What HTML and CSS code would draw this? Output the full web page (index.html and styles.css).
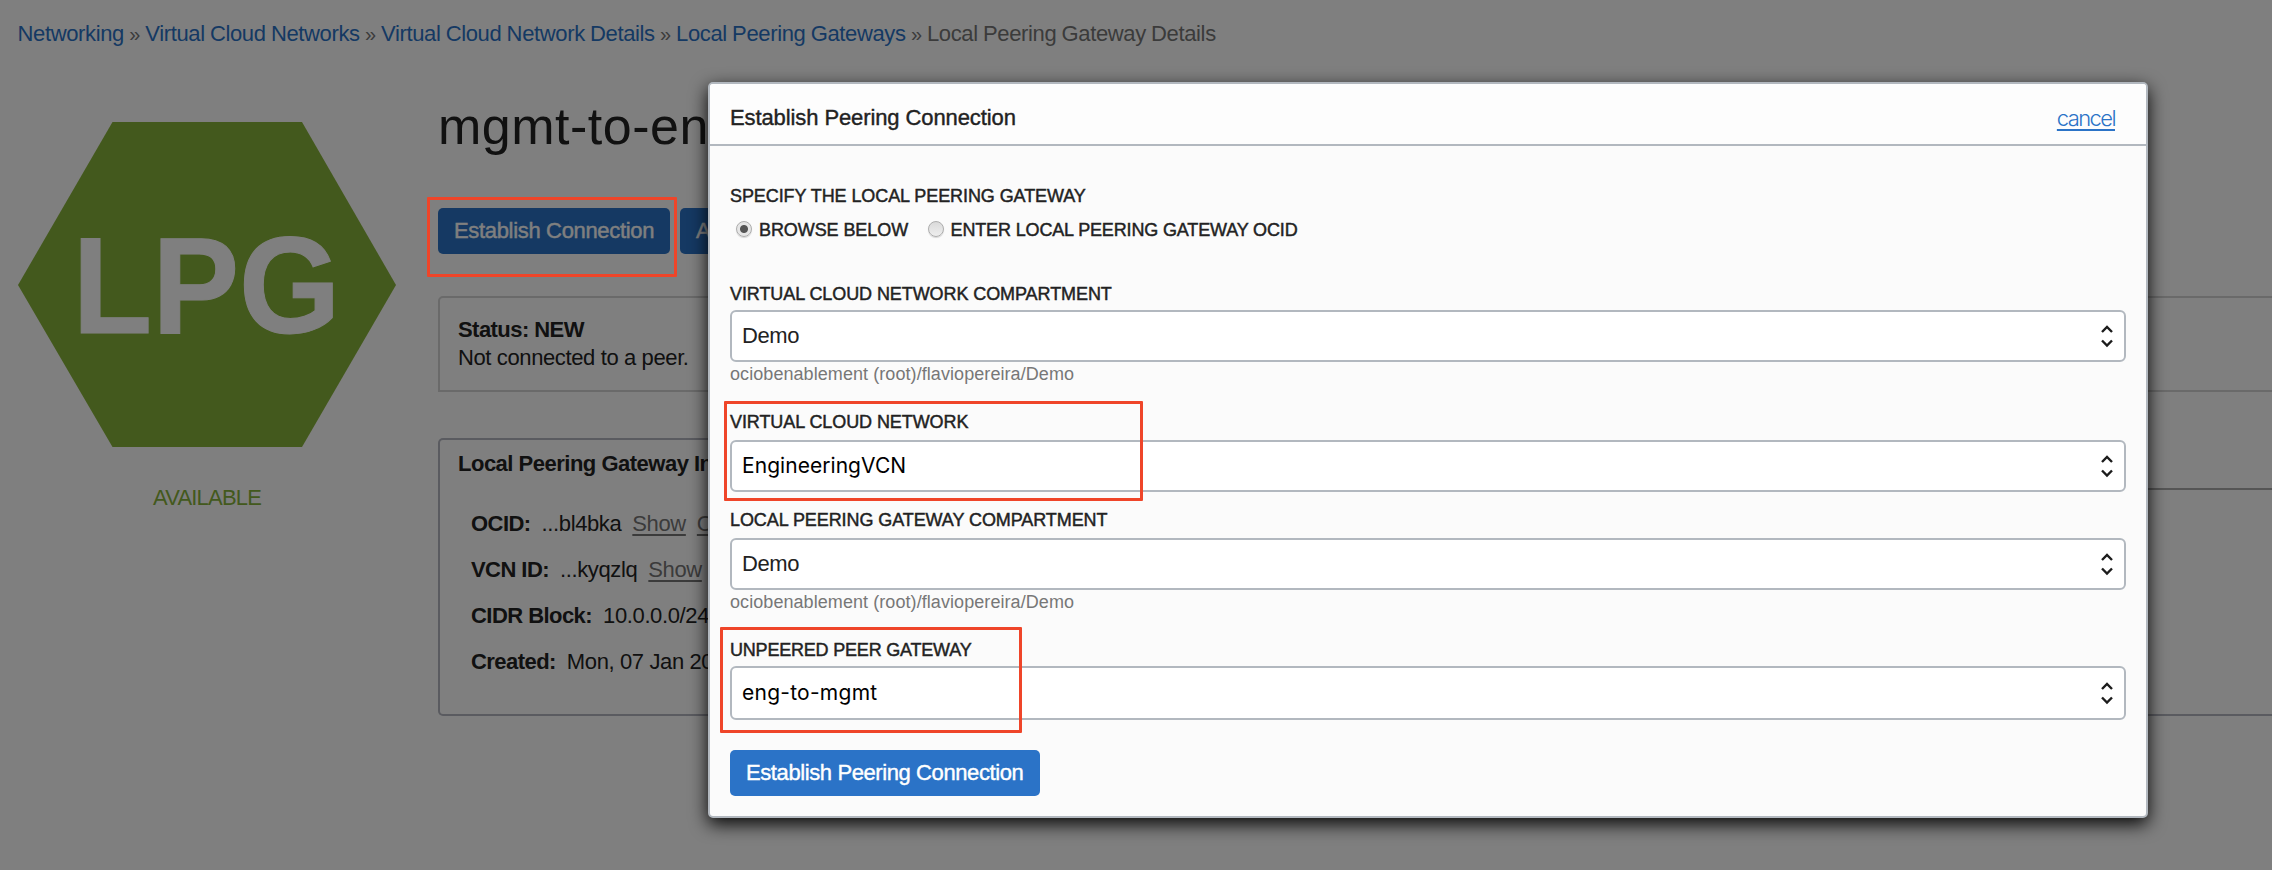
FILE: index.html
```html
<!DOCTYPE html>
<html lang="en">
<head>
<meta charset="utf-8">
<title>Local Peering Gateway Details</title>
<link rel="stylesheet" href="styles.css">
</head>
<body>
<div class="page">
  <nav class="breadcrumb"><a>Networking</a> <i>»</i> <a>Virtual Cloud Networks</a> <i>»</i> <a>Virtual Cloud Network Details</a> <i>»</i> <a>Local Peering Gateways</a> <i>»</i> <span>Local Peering Gateway Details</span></nav>
  <div class="columns">
    <aside class="resource">
      <svg class="hexagon" viewBox="0 0 378 325" width="378" height="325">
        <polygon points="94.5,0 284,0 378,163 284,325 94.5,325 0,163" fill="#87b23a"/>
        <text class="hexagon-text" x="54.5" y="210.5" textLength="268" lengthAdjust="spacingAndGlyphs">LPG</text>
      </svg>
      <div class="state">AVAILABLE</div>
    </aside>
    <main class="details">
      <h1 class="title">mgmt-to-eng</h1>
      <div class="actions"><span class="btn">Establish Connection</span><span class="btn">Add Tags</span></div>
      <section class="status"><b>Status: NEW</b><span>Not connected to a peer.</span></section>
      <section class="info">
        <div class="tab">Local Peering Gateway Information</div>
        <div class="panel">
          <div class="row"><b>OCID:</b><span>...bl4bka</span><u>Show</u><u>Copy</u></div>
          <div class="row"><b>VCN ID:</b><span>...kyqzlq</span><u>Show</u><u>Copy</u></div>
          <div class="row"><b>CIDR Block:</b><span>10.0.0.0/24</span></div>
          <div class="row"><b>Created:</b><span>Mon, 07 Jan 2019</span></div>
        </div>
      </section>
    </main>
  </div>
</div>
<div class="overlay"></div>

<div class="modal">
  <header class="modal-head"><span class="modal-title">Establish Peering Connection</span><a class="cancel">cancel</a></header>
  <div class="modal-body">
    <div class="label">SPECIFY THE LOCAL PEERING GATEWAY</div>
    <div class="radios">
      <span class="radio radio-on"></span><span class="label label-browse">BROWSE BELOW</span>
      <span class="radio"></span><span class="label label-ocid">ENTER LOCAL PEERING GATEWAY OCID</span>
    </div>
    <div class="field field-first">
      <div class="label">VIRTUAL CLOUD NETWORK COMPARTMENT</div>
      <div class="select"><span>Demo</span><svg class="arrows" viewBox="0 0 14 24"><path d="M2 8 7 3l5 5M2 16.5 7 21.5l5-5"/></svg></div>
      <div class="hint">ociobenablement (root)/flaviopereira/Demo</div>
    </div>
    <div class="field field-vcn">
      <div class="label">VIRTUAL CLOUD NETWORK</div>
      <div class="select native"><span>EngineeringVCN</span><svg class="arrows" viewBox="0 0 14 24"><path d="M2 8 7 3l5 5M2 16.5 7 21.5l5-5"/></svg></div>
    </div>
    <div class="field field-lpg">
      <div class="label">LOCAL PEERING GATEWAY COMPARTMENT</div>
      <div class="select"><span>Demo</span><svg class="arrows" viewBox="0 0 14 24"><path d="M2 8 7 3l5 5M2 16.5 7 21.5l5-5"/></svg></div>
      <div class="hint">ociobenablement (root)/flaviopereira/Demo</div>
    </div>
    <div class="field field-peer">
      <div class="label label-peer">UNPEERED PEER GATEWAY</div>
      <div class="select native tall"><span class="value-peer">eng-to-mgmt</span><svg class="arrows" viewBox="0 0 14 24"><path d="M2 8 7 3l5 5M2 16.5 7 21.5l5-5"/></svg></div>
    </div>
    <span class="btn submit">Establish Peering Connection</span>
  </div>
</div>

<div class="mark mark-button"></div>
<div class="mark mark-vcn"></div>
<div class="mark mark-peer"></div>
</body>
</html>
```
FILE: styles.css
```css
* { box-sizing: border-box; }
body {
  margin: 0;
  width: 2272px;
  height: 870px;
  position: relative;
  overflow: hidden;
  background: #fff;
  color: #222;
  font: 22px/28px "Liberation Sans", Arial, sans-serif;
  letter-spacing: -.38px;
  white-space: nowrap;
}
b { letter-spacing: -.55px; }
.page { height: 870px; overflow: hidden; }
.breadcrumb { padding: 20px 0 0 17.5px; height: 74px; color: #777; letter-spacing: -.36px; word-spacing: -.5px; }
.breadcrumb a { color: #2b73c7; }
.breadcrumb i { font-style: normal; font-size: 20px; }
.columns { display: flex; padding: 0 0 0 18px; }
.resource { width: 378px; margin: 48px 42px 0 0; flex: none; }
.hexagon { display: block; }
.hexagon-text { font: bold 138px "Liberation Sans", Arial, sans-serif; letter-spacing: 0; fill: #fff; stroke: #fff; stroke-width: 1px; }
.state { margin-top: 37px; text-align: center; color: #87b23a; letter-spacing: -.8px; }
.details { flex: none; width: 1900px; }
.title { margin: 22px 0 0 0; font-size: 52px; font-weight: 400; line-height: 60px; letter-spacing: .5px; }
.actions { display: flex; gap: 10px; margin-top: 52px; }
.btn {
  display: block;
  height: 46px;
  padding: 0 16px;
  border-radius: 5px;
  background: #2b73c7;
  color: #fff;
  line-height: 45px;
  letter-spacing: -.33px;
  -webkit-text-stroke: .4px #fff;
}
.status {
  display: flex;
  flex-direction: column;
  height: 96px;
  margin-top: 42px;
  padding: 18px 18px 0;
  border: 2px solid #d4d4d4;
  border-radius: 5px 5px 0 0;
  line-height: 28px;
}
.info { margin-top: 46px; }
.tab {
  width: 400px;
  height: 52px;
  margin-bottom: -2px;
  padding: 10px 18px;
  border: 2px solid #b4b6c0;
  border-bottom: 0;
  border-radius: 5px 5px 0 0;
  background: #fff;
  font-weight: 700;
  letter-spacing: -.5px;
  position: relative;
}
.panel {
  height: 228px;
  padding: 11px 0 0 31px;
  border: 2px solid #b4b6c0;
  border-top-color: #aaa;
  border-radius: 0 0 5px 5px;
}
.row { display: flex; gap: 11px; line-height: 46px; }
.row u { color: #777; text-decoration-thickness: 2px; text-underline-offset: 3px; }
.overlay { position: absolute; inset: 0; background: rgba(0, 0, 0, .502); }

.modal {
  position: absolute;
  left: 708px;
  top: 82px;
  width: 1440px;
  height: 736px;
  border: 2px solid #b2b8bf;
  border-radius: 5px;
  background: #fbfbfb;
  box-shadow: 0 6px 18px rgba(0, 0, 0, .95);
}
.modal-head {
  display: flex;
  justify-content: space-between;
  height: 62px;
  padding: 9px 31px 0 20px;
  border-bottom: 2px solid #b2b8bf;
  border-radius: 3px 3px 0 0;
  background: #fdfdfd;
  line-height: 50px;
}
.modal-title { -webkit-text-stroke: .4px #222; letter-spacing: -.1px; }
.cancel { color: #2b73c7; font-family: Inter, sans-serif; font-size: 22px; font-weight: 300; letter-spacing: -1.6px; text-decoration: underline 2px; text-underline-offset: 3px; }
.modal-body { padding: 38px 20px 0; }
.label { font-size: 18px; line-height: 24px; letter-spacing: -.08px; -webkit-text-stroke: .45px #222; }
.label-ocid { letter-spacing: -.15px; }
.label-peer { letter-spacing: -.2px; }
.radios { display: flex; align-items: center; margin-top: 10px; height: 24px; }
.radio {
  width: 16px;
  height: 16px;
  margin: -3px 7px 0 6px;
  border: 1px solid #adadad;
  border-radius: 50%;
  background: linear-gradient(#dadada, #eee);
  box-shadow: 0 1px 1px rgba(0, 0, 0, .15);
}
.radio-on { background: radial-gradient(circle, #555 0 3.5px, #e6e6e6 4.5px); }
.label-browse { margin-right: 13.5px; }
.field-first { margin-top: 40px; }
.field-vcn, .field-peer { margin-top: 24px; }
.field-lpg { margin-top: 16px; }
.select {
  display: flex;
  align-items: center;
  justify-content: space-between;
  height: 52px;
  margin-top: 4px;
  padding: 0 10px;
  border: 2px solid #b2b8bf;
  border-radius: 6px;
  background: #fff;
}
.field-vcn .select, .field-lpg .select { margin-top: 6px; }
.tall { height: 54px; }
.native { color: #000; font-family: Inter, sans-serif; font-size: 21px; letter-spacing: .05px; }
.value-peer { letter-spacing: .25px; }
.arrows { width: 14px; height: 24px; fill: none; stroke: #1c1c1c; stroke-width: 2.4; }
.hint { font-size: 18px; line-height: 24px; letter-spacing: .07px; color: #777; }
.submit { width: 310px; margin-top: 30px; letter-spacing: -.4px; }

.mark { position: absolute; border: 3px solid #ef4529; border-radius: 1px; }
.mark-button { left: 427px; top: 197px; width: 250px; height: 80px; }
.mark-vcn { left: 724px; top: 401px; width: 419px; height: 100px; }
.mark-peer { left: 720px; top: 627px; width: 302px; height: 106px; }
```
